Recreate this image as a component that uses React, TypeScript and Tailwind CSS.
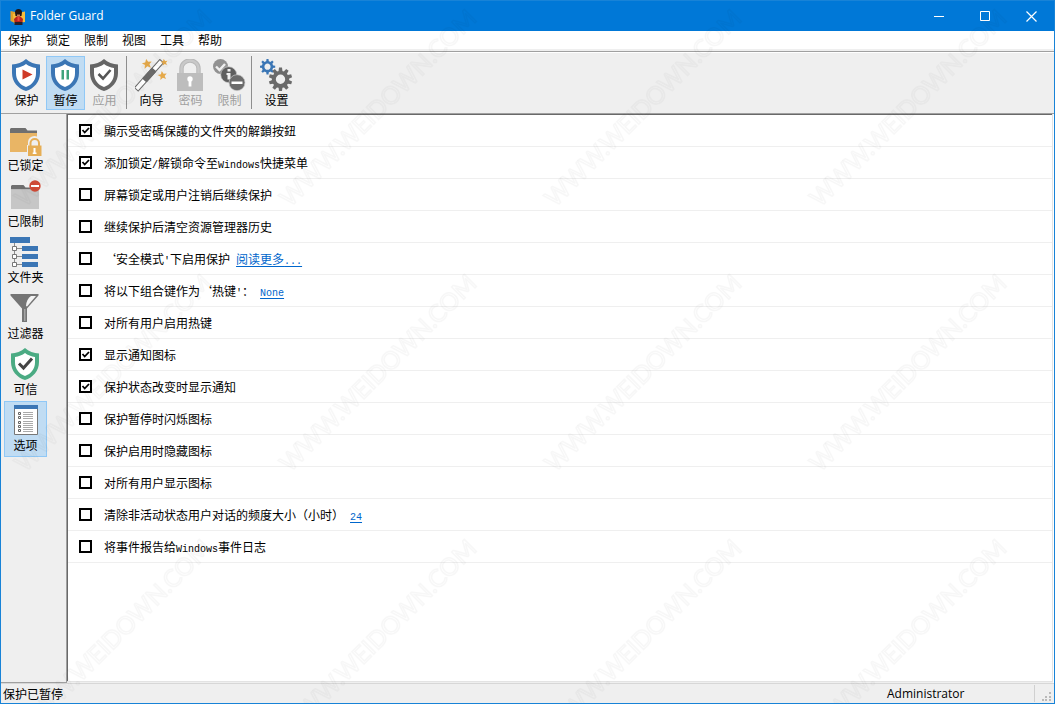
import { useState } from "react";
import type { ReactNode } from "react";

const Icon = ({ children }: { children: ReactNode }) => (
  <svg width="33" height="33" viewBox="0 0 33 33" fill="none" aria-hidden="true" className="shrink-0">
    {children}
  </svg>
);

const Shield = ({ color, children }: { color: string; children: ReactNode }) => (
  <Icon>
    <path
      d="M16 0C12.5 3.4 7 5.4 2 5.6V14c0 9 6 15.6 14 18 8-2.4 14-9 14-18V5.6C25 5.4 19.5 3.4 16 0Z"
      fill={color}
    />
    <path
      d="M16 5C13.5 7 9.5 8.500 6 9v5.500C6 21 10 25.800 16 28c6-2.200 10-7 10-13.500V9C22.500 8.500 18.500 7 16 5Z"
      fill="#fff"
    />
    {children}
  </Icon>
);

const Gear = ({ cx, cy, r, teeth, color }: { cx: number; cy: number; r: number; teeth: number; color: string }) => (
  <g transform={`translate(${cx} ${cy})`}>
    {Array.from({ length: teeth }, (_, i) => (
      <path
        key={i}
        d={`M${-r * 0.18} ${-r * 0.6}L${-r * 0.13} ${-r}H${r * 0.13}L${r * 0.18} ${-r * 0.6}Z`}
        fill={color}
        transform={`rotate(${(360 / teeth) * i})`}
      />
    ))}
    <circle r={r * 0.57} stroke={color} strokeWidth={r * 0.34} />
  </g>
);

const Star = ({ x, y, s }: { x: number; y: number; s: number }) => (
  <path
    d="M0-5 1.5-1.7 5-1.5 2.3.9 3.2 4.5 0 2.6-3.2 4.5-2.3.9-5-1.5-1.5-1.7Z"
    fill="#e5a94a"
    transform={`translate(${x} ${y}) rotate(-10) scale(${s})`}
  />
);

const ProtectIcon = () => (
  <Shield color="#3b76b5">
    <path d="M12.5 10.5 22.5 15.5 12.5 20.5Z" fill="#cf3a26" />
  </Shield>
);

const PauseIcon = () => (
  <Shield color="#3b76b5">
    <path d="M12.5 11h2.5v9.500h-2.500ZM17.5 11H20v9.500h-2.500Z" fill="#3fa37c" />
  </Shield>
);

const ApplyIcon = () => (
  <Shield color="#666">
    <path d="m10.5 15 4.5 4.5 7.500-8.500" stroke="#555" strokeWidth="2.6" />
  </Shield>
);

const WandIcon = () => (
  <Icon>
    <path d="M3 28.500 25 4" stroke="#6a6a6a" strokeWidth="6" strokeLinecap="square" />
    <path d="M3 28.500 8 22.900M20.500 9 25 4" stroke="#fff" strokeWidth="4" strokeLinecap="square" />
    <path d="M9.500 21.200 19 10.700" stroke="#6a6a6a" strokeWidth="6" />
    <Star x={12} y={4.8} s={1} />
    <Star x={29.3} y={3.3} s={0.7} />
    <Star x={27.5} y={16.5} s={0.9} />
  </Icon>
);

const PasswordIcon = () => (
  <Icon>
    <path d="M7.500 15V9.500a8.500 8 0 0 1 17 0V15" stroke="#b9b9b9" strokeWidth="4.4" />
    <path d="M7.500 15V9.500a8.500 8 0 0 1 17 0V15" stroke="#c9c9c9" strokeWidth="2.4" />
    <path d="M3 14h26v18H3Z" fill="#bdbdbd" />
    <circle cx="16" cy="20" r="2.7" fill="#fff" />
    <path d="M14.6 21h2.800v6.500h-2.800Z" fill="#fff" />
  </Icon>
);

const RestrictIcon = () => (
  <Icon>
    <circle cx="7.5" cy="7.5" r="7.5" fill="#929292" />
    <path d="m3 7.500 3.500 3.500L12 5" stroke="#efefef" strokeWidth="2.4" />
    <circle cx="15.7" cy="15.7" r="8" fill="#5e5e5e" stroke="#cfcfcf" strokeWidth=".7" />
    <path d="M14.5 10h3v2.500h-3ZM13.5 14h4v6.500h-3V16h-1Z" fill="#efefef" />
    <circle cx="24" cy="23.7" r="8" fill="#6b6b6b" stroke="#cfcfcf" strokeWidth=".7" />
    <path d="M18.5 22.500h11V25h-11Z" fill="#fff" />
  </Icon>
);

const SettingsIcon = () => (
  <Icon>
    <Gear cx={7.5} cy={7.7} r={7.7} teeth={8} color="#3b76b5" />
    <Gear cx={20.5} cy={20.3} r={11.7} teeth={10} color="#6a6a6a" />
  </Icon>
);

const LockedIcon = () => (
  <Icon>
    <path d="M1 9V5l1-1h14.5l2 2.500H28V9Z" fill="#6f6f6f" />
    <path d="M1 9h27v19H1Z" fill="#e9b565" />
    <path d="M18 21h1V18a6 5.500 0 0 1 13 0v3h1v12H18Z" fill="#efefef" />
    <path d="M21.5 22v-3a4.200 4 0 0 1 8.500 0v3" stroke="#e6ae55" strokeWidth="2" />
    <path d="M19 21.500h13.500V32H19Z" fill="#e6ae55" />
    <path d="M24.5 24h2v5.500h-2ZM23.700 28.500h3.800v1.500h-3.800Z" fill="#fff" />
  </Icon>
);

const RestrictedIcon = () => (
  <Icon>
    <path d="M2 9.500V6l1-1h11.500l2 2.500H30v2Z" fill="#6f6f6f" />
    <path d="M2 9.500h28V29H2Z" fill="#c6c6c6" />
    <circle cx="26" cy="6" r="5.7" fill="#d04a36" />
    <path d="M22 5h8v2h-8Z" fill="#fff" />
  </Icon>
);

const FoldersIcon = () => (
  <Icon>
    <path d="M1 1h20v6H1ZM13 10h16v5H13ZM13 18h16v5H13ZM13 26h16v5H13Z" fill="#3b76b5" />
    <path d="M5.5 7v21M7 12.500h6M7 20.500h6M7 28.500h6" stroke="#8c8c8c" />
    <path
      d="M3.5 10.500h4v4h-4ZM3.5 18.500h4v4h-4ZM3.5 26.500h4v4h-4Z"
      fill="#fff"
      stroke="#777"
    />
  </Icon>
);

const FilterIcon = () => (
  <Icon>
    <path d="M1.5 2h28v1.500L18 16.500V30h-5V16.500L1.500 3.500Z" fill="#757575" />
    <path d="M27 4 18 14.500 17 14c0-4 2-8 5-10Z" fill="#f4f4f4" />
    <path d="M15 17h1.500v12H15Z" fill="#a5a5a5" />
  </Icon>
);

const TrustedIcon = () => (
  <Shield color="#4bab83">
    <path d="m10 15.500 4.500 4.500 8.500-9.500" stroke="#444" strokeWidth="3" />
  </Shield>
);

const OptionsIcon = () => (
  <Icon>
    <path d="M5.5 1.500h23v29h-23Z" fill="#fff" stroke="#777" />
    <path d="M5 1h24v4H5Z" fill="#3b76b5" />
    {[8, 12, 17, 21, 25].map((y) => (
      <g key={y}>
        <path d={`M9.5 ${y + 0.5}h2v2h-2Z`} stroke="#666" />
        <path d={`M14 ${y + 0.5}h10M14 ${y + 2.5}h10`} stroke="#aaa" />
      </g>
    ))}
  </Icon>
);

const AppIcon = () => (
  <svg width="17" height="17" viewBox="0 0 17 17" aria-hidden="true">
    <path d="M1.5 3 6 4v11l-4.500-2Z" fill="#e0a02a" />
    <path d="M4 6l12-2.500V14L5 15.500Z" fill="#f7bd3c" />
    <path d="M6 4C6 0 13 0 13 4l-.5 4h-6Z" fill="#221512" />
    <path d="M8 6.500h3v2.500H8Z" fill="#c9825f" />
    <path d="M5 11l2.500-2.500h4L14 11l-.5 3.500h-8Z" fill="#b8231c" />
    <path d="M8.5 9h2v4h-2Z" fill="#e8483a" />
    <path d="M5.5 14h8v3h-8Z" fill="#22202c" />
  </svg>
);

const menus = ["保护", "锁定", "限制", "视图", "工具", "帮助"];

const toolGroups = [
  [
    { label: "保护", icon: ProtectIcon },
    { label: "暂停", icon: PauseIcon, active: true },
    { label: "应用", icon: ApplyIcon, disabled: true },
  ],
  [
    { label: "向导", icon: WandIcon },
    { label: "密码", icon: PasswordIcon, disabled: true },
    { label: "限制", icon: RestrictIcon, disabled: true },
  ],
  [{ label: "设置", icon: SettingsIcon }],
];

const views = [
  { label: "已锁定", icon: LockedIcon },
  { label: "已限制", icon: RestrictedIcon },
  { label: "文件夹", icon: FoldersIcon },
  { label: "过滤器", icon: FilterIcon },
  { label: "可信", icon: TrustedIcon },
  { label: "选项", icon: OptionsIcon },
];

// Half-width characters sit on a 6px cell next to the 12px Chinese ones
const Half = ({ children }: { children: ReactNode }) => (
  <span className="font-['Liberation_Mono',monospace] text-[10px] leading-none whitespace-pre">{children}</span>
);

const options: { text: ReactNode; checked?: boolean; link?: ReactNode }[] = [
  { text: "顯示受密碼保護的文件夾的解鎖按鈕", checked: true },
  {
    text: (
      <>
        添加锁定<Half>/</Half>解锁命令至<Half>Windows</Half>快捷菜单
      </>
    ),
    checked: true,
  },
  { text: "屏幕锁定或用户注销后继续保护" },
  { text: "继续保护后清空资源管理器历史" },
  {
    text: (
      <>
        ‘安全模式<Half>'</Half>下启用保护
      </>
    ),
    link: (
      <>
        阅读更多<Half>...</Half>
      </>
    ),
  },
  {
    text: (
      <>
        将以下组合键作为‘热键<Half>'</Half>：
      </>
    ),
    link: <Half>None</Half>,
  },
  { text: "对所有用户启用热键" },
  { text: "显示通知图标", checked: true },
  { text: "保护状态改变时显示通知", checked: true },
  { text: "保护暂停时闪烁图标" },
  { text: "保护启用时隐藏图标" },
  { text: "对所有用户显示图标" },
  { text: "清除非活动状态用户对话的频度大小（小时）", link: <Half>24</Half> },
  {
    text: (
      <>
        将事件报告给<Half>Windows</Half>事件日志
      </>
    ),
  },
];

const TitleBar = () => (
  <header className="flex h-[30px] shrink-0 items-center bg-[#0078d7] pl-2 text-white">
    <AppIcon />
    <h1 className="ml-1 grow font-['Open_Sans',sans-serif] text-xs">Folder Guard</h1>
    <button aria-label="Minimize" className="flex h-full w-[46px] items-center justify-center">
      <svg width="11" height="11" viewBox="0 0 11 11" stroke="currentColor">
        <path d="M0 5.500h10" />
      </svg>
    </button>
    <button aria-label="Maximize" className="flex h-full w-[46px] items-center justify-center">
      <svg width="11" height="11" viewBox="0 0 11 11" fill="none" stroke="currentColor">
        <path d="M.5.5h9v9h-9Z" />
      </svg>
    </button>
    <button aria-label="Close" className="flex h-full w-[46px] items-center justify-center">
      <svg width="11" height="11" viewBox="0 0 11 11" stroke="currentColor">
        <path d="m.5.5 10 10M10.5.5l-10 10" strokeWidth="1.2" />
      </svg>
    </button>
  </header>
);

const Toolbar = () => (
  <div className="flex h-[61px] shrink-0 border-b border-[#a0a0a0] pt-[3px] pl-[6px]">
    {toolGroups.map((group, index) => (
      <div key={index} className="flex">
        {index > 0 && <div className="mr-[5px] ml-[2px] h-[53px] w-px bg-[#8e8e8e]" />}
        {group.map((tool) => (
          <button
            key={tool.label}
            disabled={tool.disabled}
            className={`flex h-[54px] w-[39px] flex-col items-center gap-px border pt-[2px] leading-[14px] ${
              tool.active ? "border-[#90c8f6] bg-[#c0dcf3]" : "border-transparent"
            } ${tool.disabled ? "text-[#a0a0a0]" : ""}`}
          >
            <tool.icon />
            <span>{tool.label}</span>
          </button>
        ))}
      </div>
    ))}
  </div>
);

const Sidebar = ({ view, setView }: { view: string; setView: (view: string) => void }) => (
  <nav className="w-[66px] shrink-0 border-r border-b border-[#a0a0a0] pt-[7px] pl-[3px]">
    {views.map((item) => (
      <button
        key={item.label}
        onClick={() => setView(item.label)}
        className={`flex h-14 w-[43px] flex-col items-center gap-px border pt-[2px] leading-[14px] ${
          view === item.label ? "border-[#90c8f6] bg-[#c0dcf3]" : "border-transparent"
        }`}
      >
        <item.icon />
        <span className="whitespace-nowrap">{item.label}</span>
      </button>
    ))}
  </nav>
);

const OptionList = () => (
  <ul className="grow border-t border-l border-[#696969] bg-white">
    {options.map((option, index) => (
      <li key={index} className="flex h-8 items-center border-b border-[#efefef] pl-[11px]">
        <label className="flex items-center gap-3">
          <span className="grid">
            <input
              type="checkbox"
              defaultChecked={option.checked}
              className="peer col-start-1 row-start-1 size-[13px] appearance-none border-2 border-black bg-white"
            />
            <svg
              width="13"
              height="13"
              viewBox="0 0 13 13"
              fill="none"
              aria-hidden="true"
              className="pointer-events-none invisible col-start-1 row-start-1 peer-checked:visible"
            >
              <path d="m3.500 6 2.200 2.500L10 4" stroke="#000" strokeWidth="1.8" />
            </svg>
          </span>
          <span>{option.text}</span>
        </label>
        {option.link && (
          <a href="#" className="ml-[6px] text-[#0066cc] underline underline-offset-2">
            {option.link}
          </a>
        )}
      </li>
    ))}
  </ul>
);

const StatusBar = () => (
  <footer className="flex h-5 shrink-0 border-t border-[#d7d7d7] leading-5">
    <span className="grow pl-[2px]">保护已暂停</span>
    <span className="my-px w-[148px] border-r border-[#d0d0d0] font-['Open_Sans',sans-serif] leading-[18px]">
      Administrator
    </span>
    <svg width="19" height="18" viewBox="0 0 19 18" fill="#b9b9b9" aria-hidden="true">
      <path d="M14 8h2v2h-2ZM14 12h2v2h-2ZM10 12h2v2h-2ZM14 15h2v2h-2ZM10 15h2v2h-2ZM7 15h2v2H7Z" />
    </svg>
  </footer>
);

const Watermark = () => (
  <svg className="pointer-events-none absolute inset-0 h-full w-full" aria-hidden="true">
    <defs>
      <pattern id="mark" x="10" y="5" width="265" height="265" patternUnits="userSpaceOnUse">
        <text
          transform="translate(14 202) rotate(-45)"
          fontFamily="Lato, sans-serif"
          fontSize="24"
          fill="none"
          stroke="#000"
          strokeOpacity=".03"
          strokeWidth="1.5"
        >
          WWW.WEIDOWN.COM
        </text>
      </pattern>
    </defs>
    <rect width="100%" height="100%" fill="url(#mark)" />
  </svg>
);

const App = () => {
  const [view, setView] = useState("选项");

  return (
    <div className="relative flex min-h-screen flex-col border border-[#1883d7] bg-[#efefef] font-['Noto_Sans_CJK_SC',sans-serif] text-xs text-black">
      <TitleBar />
      <nav className="flex h-[18px] shrink-0 bg-white">
        {menus.map((menu) => (
          <button key={menu} className="px-[7px] leading-[18px]">
            {menu}
          </button>
        ))}
      </nav>
      <div className="mt-[2px] h-[2px] shrink-0 border-t border-[#a0a0a0] bg-white" />
      <Toolbar />
      <main className="flex grow">
        <Sidebar view={view} setView={setView} />
        <div className="flex grow border-r border-white pb-px">
          <div className="flex grow border-r border-b border-[#e3e3e3]">
            <OptionList />
          </div>
        </div>
      </main>
      <StatusBar />
      <Watermark />
    </div>
  );
};

export default App;
